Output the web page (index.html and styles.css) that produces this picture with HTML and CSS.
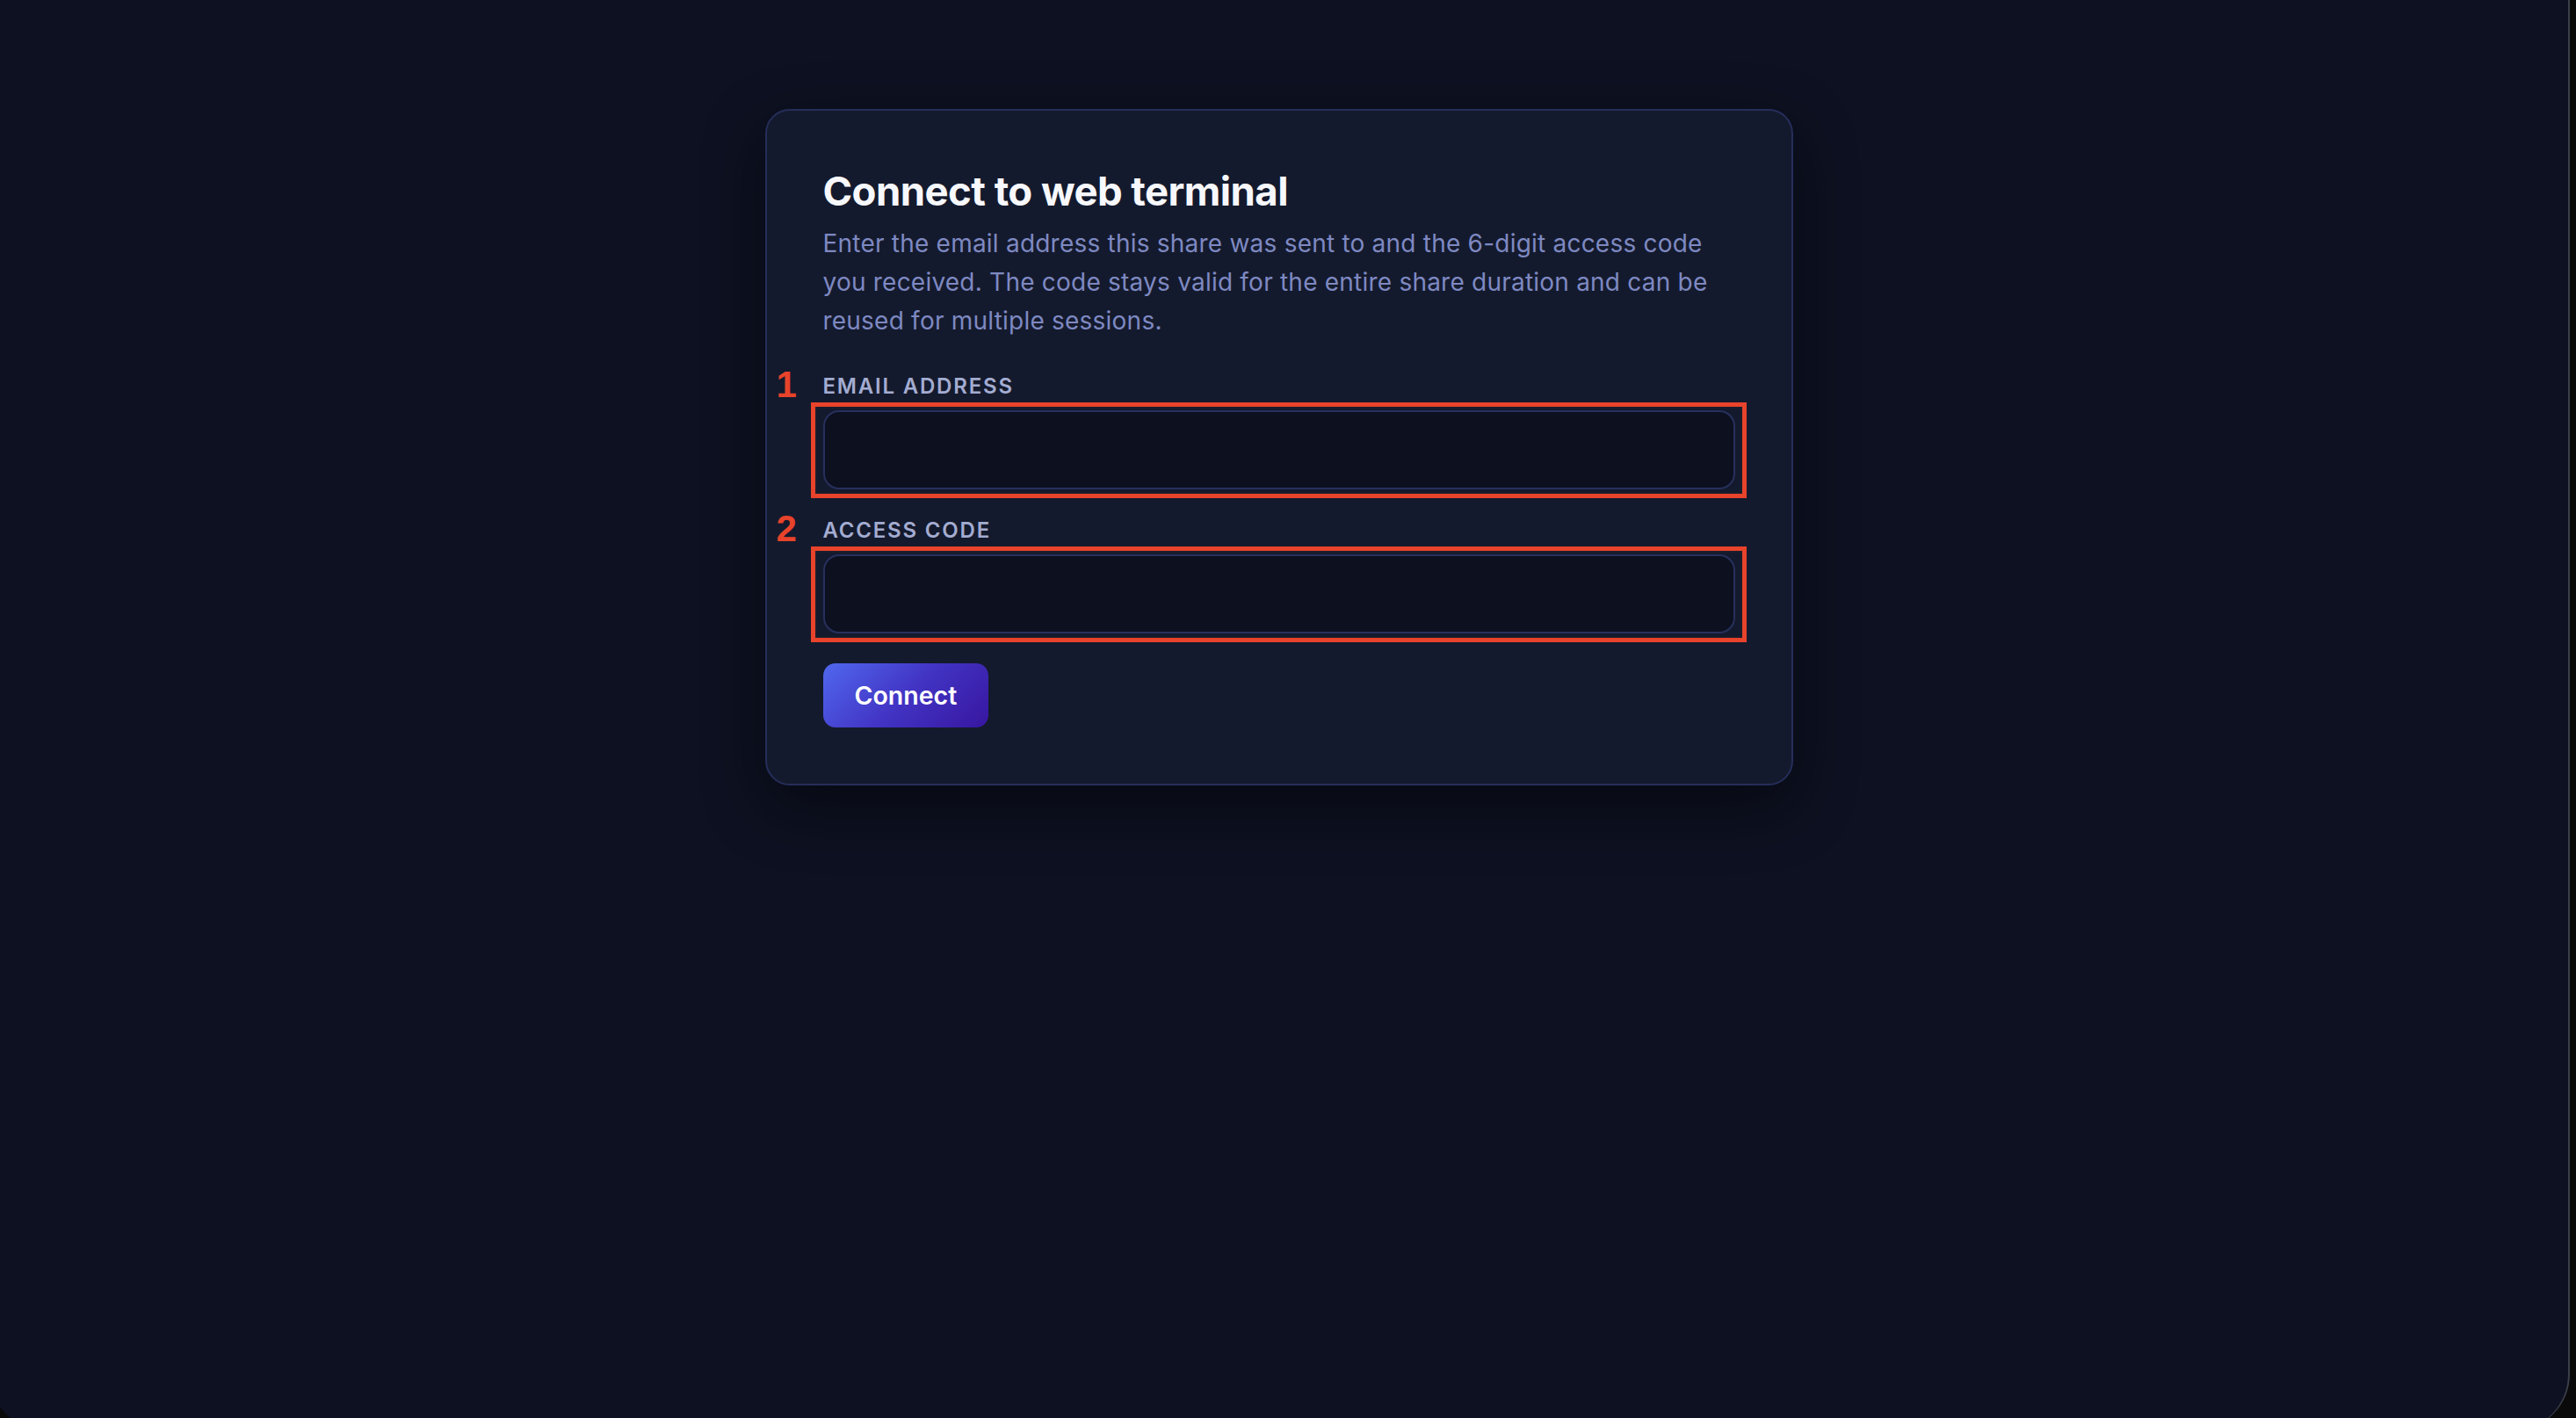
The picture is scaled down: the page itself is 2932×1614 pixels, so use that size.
FILE: index.html
```html
<!DOCTYPE html>
<html lang="en">
<head>
<meta charset="utf-8">
<title>Connect to web terminal</title>
<link rel="stylesheet" href="styles.css">
</head>
<body>
<div class="window">
  <main class="card">
    <h1 class="title">Connect to web terminal</h1>
    <p class="desc">Enter the email address this share was sent to and the 6-digit access code you received. The code stays valid for the entire share duration and can be reused for multiple sessions.</p>
    <form class="form">
      <div class="field">
        <label class="label" for="email">Email address</label>
        <div class="input-wrap">
          <input id="email" class="input" type="email">
          <span class="mark-box"></span>
          <span class="mark-num">1</span>
        </div>
      </div>
      <div class="field">
        <label class="label" for="code">Access code</label>
        <div class="input-wrap">
          <input id="code" class="input" type="text">
          <span class="mark-box"></span>
          <span class="mark-num">2</span>
        </div>
      </div>
      <button class="btn" type="button">Connect</button>
    </form>
  </main>
</div>
</body>
</html>
```
FILE: styles.css
```css
html, body {
  margin: 0;
  padding: 0;
  height: 100%;
  background: #0a0a0b;
  overflow: hidden;
}

.window {
  box-sizing: border-box;
  margin-left: -12px;
  width: 2937px;
  height: 1628px;
  background: #0d1121;
  border-right: 2px solid #3b3f4a;
  border-radius: 0 0 64px 64px;
  padding-top: 124px;
  font-family: "Inter", "Noto Sans", sans-serif;
}

.card {
  box-sizing: border-box;
  width: 1170px;
  margin: 0 auto;
  padding: 64px;
  background: #141a2d;
  border: 2px solid #252e5a;
  border-radius: 28px;
  box-shadow: 0 24px 70px rgba(0, 0, 0, 0.45);
}

.title {
  margin: 0;
  font-size: 45.5px;
  line-height: 55px;
  font-weight: 700;
  color: #f7f8fc;
  letter-spacing: -0.55px;
}

.desc {
  margin: 10px 0 0;
  font-size: 28px;
  line-height: 44px;
  font-weight: 400;
  color: #7e89c2;
  letter-spacing: 0.22px;
}

.form {
  margin-top: 39px;
  display: flex;
  flex-direction: column;
  gap: 33px;
}

.field {
  display: flex;
  flex-direction: column;
}

.label {
  font-size: 24px;
  line-height: 28px;
  font-weight: 600;
  text-transform: uppercase;
  letter-spacing: 0.075em;
  color: #a3acd1;
  margin-bottom: 13px;
}

.input-wrap {
  position: relative;
}

.input {
  display: block;
  box-sizing: border-box;
  width: 100%;
  height: 90px;
  margin: 0;
  padding: 0 24px;
  background: #0c101f;
  border: 2px solid #27305d;
  border-radius: 18px;
  outline: none;
  color: #e6e9f5;
  font-family: inherit;
  font-size: 28px;
}

.mark-box {
  position: absolute;
  left: -14px;
  right: -13px;
  top: -9px;
  bottom: -10px;
  border: 5px solid #e8432b;
  box-shadow: inset 0 0 0 2px #1b1d2b;
  pointer-events: none;
}

.mark-num {
  position: absolute;
  left: -53px;
  top: -50px;
  font-family: "Liberation Sans", Arial, sans-serif;
  font-weight: 700;
  font-size: 42px;
  line-height: 42px;
  color: #e8432b;
}

.btn {
  align-self: flex-start;
  margin-top: 1px;
  height: 73px;
  padding: 0 36px;
  border: none;
  border-radius: 14px;
  background: linear-gradient(135deg, #5068ee 0%, #4234c4 50%, #3716a0 100%);
  color: #ffffff;
  font-family: inherit;
  font-size: 28.5px;
  font-weight: 600;
  cursor: pointer;
}
```
